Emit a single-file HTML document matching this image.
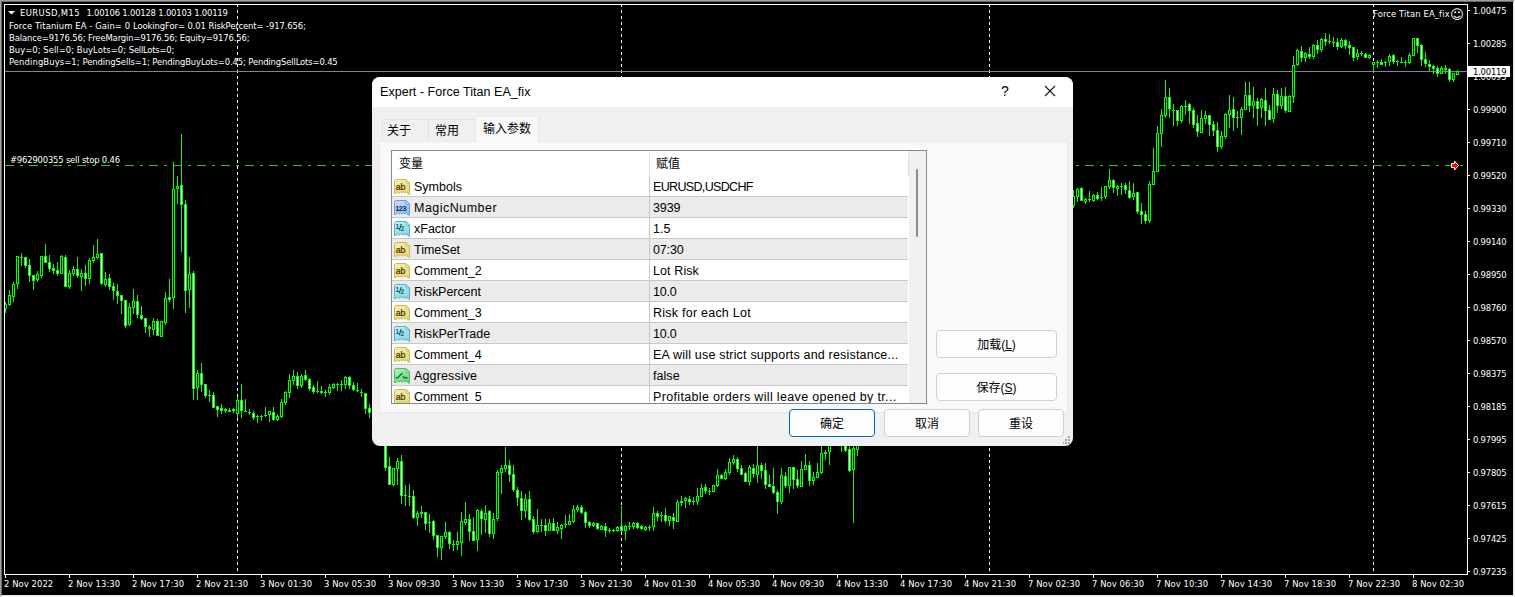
<!DOCTYPE html>
<html lang="zh-CN"><head><meta charset="utf-8"><title>EURUSD,M15</title>
<style>
*{box-sizing:border-box;margin:0;padding:0}
html,body{width:1515px;height:597px;overflow:hidden;background:#000}
body{font-family:"Liberation Sans","Noto Sans CJK SC",sans-serif}
.app{position:absolute;left:0;top:0;width:1515px;height:597px;background:#fff;overflow:hidden;
 border-top:1px solid #a0a0a0;border-left:1px solid #a0a0a0;border-right:1px solid #fff;border-bottom:1px solid #fff}
.black{position:absolute;left:0;top:0;width:1513px;height:595px;background:#000;
 border-top:1px solid #696969;border-left:1px solid #696969;border-right:1px solid #e3e3e3;border-bottom:1px solid #e3e3e3}
.chart{position:absolute;left:-1px;top:-1px}
.t{position:absolute;color:#fff;white-space:nowrap;font-family:"DejaVu Sans","Liberation Sans",sans-serif;font-stretch:condensed;font-size:9.4px;line-height:12px;height:12px;margin:0 0 0 -2px}
.pr{letter-spacing:-0.21px}
.tm{letter-spacing:0.065px}
.l1{letter-spacing:-0.03px}
.ln0{letter-spacing:-0.033px}
.ln1{letter-spacing:-0.117px}
.ln2{letter-spacing:-0.062px}
.ln3{letter-spacing:-0.092px}
.ss{letter-spacing:-0.194px}
.bid{letter-spacing:-0.21px;position:absolute;left:1467px;top:65px;width:42px;height:11px;background:#fff;color:#000;font-family:"DejaVu Sans","Liberation Sans",sans-serif;font-stretch:condensed;font-size:9.4px;line-height:11px;padding-left:5px;white-space:nowrap}
.ea{letter-spacing:0.11px}
.smile{position:absolute;left:1449px;top:6px;color:#fff;font-family:"DejaVu Sans",sans-serif;font-size:13.4px;line-height:16px;height:16px}
/* dialog */
.dlg{position:absolute;left:371px;top:76px;width:701px;height:369px;background:#f0f0f0;border-radius:8px;overflow:hidden;font-size:12px;color:#000}
.ttl{position:absolute;left:0;top:0;width:100%;height:30px;background:#fff}
.ttx{position:absolute;left:8px;top:7px;font-size:12.5px;line-height:16px;white-space:nowrap;letter-spacing:0.04px}
.q{position:absolute;left:629px;top:6px;font-size:14px;line-height:17px}
.x{position:absolute;left:672px;top:8px}
.tab{position:absolute;top:42px;height:23px;background:#f0f0f0;border:1px solid #e2e2e2;border-bottom:none;font-size:12px;line-height:22px;text-align:left;white-space:nowrap}
.t1{left:10px;width:47px;padding-left:4px}
.t2{left:56px;width:48px;padding-left:6px}
.t3{left:103px;width:64px;top:39px;height:26px;background:#f9f9f9;border-color:#e8e8e8;line-height:25px;padding-left:7px}
.pane{position:absolute;left:7px;top:64px;width:689px;height:272px;background:#f9f9f9;border:1px solid #e8e8e8}
.list{position:absolute;left:19px;top:73px;width:536px;height:254px;background:#fff;border:1px solid #828790;overflow:hidden}
.hd{position:absolute;left:0;top:0;width:517px;height:25px;background:#fff}
.hd span{position:absolute;top:5px;font-size:12px;line-height:16px}
.h1{left:7px}.h2{left:264px}
.hv1,.hv2{position:absolute;top:2px;width:1px;height:23px;background:#e0e0e0}
.hv1{left:257px}.hv2{left:516px}
.row{position:absolute;left:0;width:516px;height:21px;border-bottom:1px solid #c8c8c8;background:#fff;white-space:nowrap}
.row.odd{background:#ebebeb}
.ic{position:absolute;left:2px;top:3px}
.nm{position:absolute;left:22px;top:3px;font-size:12.5px;line-height:16px}
.vl{position:absolute;left:261px;top:3px;font-size:12.5px;line-height:16px}
.cv{position:absolute;left:257px;top:25px;width:1px;height:240px;background:#c8c8c8}
.sb{position:absolute;left:517px;top:0;width:17px;height:252px;background:#f0f0f0}
.th{position:absolute;left:7px;top:18px;width:2px;height:68px;background:#8a8a8a;border-radius:1px}
.btn{position:absolute;height:28px;border:1px solid #d0d0d0;border-radius:4px;background:#fdfdfd;font-size:12px;line-height:28px;text-align:center;white-space:nowrap}
.btn.def{border-color:#0067c0}
.grip{position:absolute;left:690px;top:358px}

</style></head>
<body>
<div class="app">
<div class="black"></div>
<svg class="chart" width="1515" height="597" viewBox="0 0 1515 597" shape-rendering="crispEdges">
<line x1="237.5" y1="4" x2="237.5" y2="574" stroke="#fff" stroke-width="1" stroke-dasharray="3 3" stroke-dashoffset="0"/>
<line x1="621.5" y1="4" x2="621.5" y2="574" stroke="#fff" stroke-width="1" stroke-dasharray="3 3" stroke-dashoffset="0"/>
<line x1="989.5" y1="4" x2="989.5" y2="574" stroke="#fff" stroke-width="1" stroke-dasharray="3 3" stroke-dashoffset="0"/>
<line x1="1373.5" y1="4" x2="1373.5" y2="574" stroke="#fff" stroke-width="1" stroke-dasharray="3 3" stroke-dashoffset="0"/>
<line x1="5" y1="71.5" x2="1467" y2="71.5" stroke="#778899" stroke-width="1"/>
<line x1="5" y1="165.5" x2="1467" y2="165.5" stroke="#2dc82d" stroke-width="1" stroke-dasharray="9 6 3 6"/>
<path d="M5 302h1v11h-1zM4 304h3v5h-3zM9 290h1v16h-1zM8 295h3v10h-3zM13 282h1v20h-1zM12 284h3v13h-3zM17 256h1v33h-1zM16 256h3v28h-3zM21 253h1v13h-1zM20 257h3v1h-3zM25 257h1v11h-1zM24 257h3v9h-3zM29 259h1v23h-1zM28 265h3v11h-3zM33 275h1v15h-1zM32 275h3v6h-3zM37 271h1v11h-1zM36 274h3v6h-3zM41 256h1v22h-1zM40 256h3v20h-3zM45 244h1v19h-1zM44 256h3v7h-3zM49 255h1v17h-1zM48 262h3v7h-3zM53 264h1v10h-1zM52 268h3v3h-3zM57 262h1v14h-1zM56 270h3v4h-3zM61 255h1v19h-1zM60 256h3v18h-3zM65 255h1v32h-1zM64 257h3v30h-3zM69 270h1v19h-1zM68 273h3v14h-3zM73 266h1v10h-1zM72 269h3v5h-3zM77 257h1v21h-1zM76 269h3v7h-3zM81 269h1v22h-1zM80 273h3v4h-3zM85 265h1v21h-1zM84 273h3v6h-3zM89 258h1v26h-1zM88 260h3v19h-3zM93 245h1v18h-1zM92 257h3v4h-3zM97 239h1v20h-1zM96 254h3v4h-3zM101 253h1v32h-1zM100 253h3v31h-3zM105 272h1v15h-1zM104 279h3v6h-3zM109 274h1v16h-1zM108 278h3v9h-3zM113 283h1v17h-1zM112 286h3v5h-3zM117 284h1v20h-1zM116 291h3v5h-3zM121 295h1v19h-1zM120 295h3v6h-3zM125 300h1v28h-1zM124 300h3v26h-3zM129 303h1v23h-1zM128 307h3v18h-3zM133 289h1v25h-1zM132 301h3v7h-3zM137 295h1v23h-1zM136 301h3v14h-3zM141 306h1v14h-1zM140 315h3v4h-3zM145 318h1v15h-1zM144 318h3v9h-3zM149 325h1v12h-1zM148 327h3v2h-3zM153 318h1v17h-1zM152 321h3v9h-3zM157 319h1v17h-1zM156 321h3v15h-3zM161 321h1v16h-1zM160 321h3v16h-3zM165 292h1v33h-1zM164 298h3v25h-3zM169 279h1v23h-1zM168 297h3v3h-3zM173 162h1v147h-1zM172 189h3v109h-3zM177 176h1v28h-1zM176 186h3v3h-3zM181 134h1v118h-1zM180 185h3v20h-3zM185 200h1v113h-1zM184 204h3v87h-3zM189 257h1v51h-1zM188 274h3v16h-3zM193 271h1v129h-1zM192 273h3v116h-3zM197 370h1v30h-1zM196 373h3v15h-3zM201 363h1v29h-1zM200 373h3v12h-3zM205 384h1v14h-1zM204 384h3v12h-3zM209 390h1v12h-1zM208 395h3v1h-3zM213 392h1v16h-1zM212 395h3v13h-3zM217 406h1v11h-1zM216 406h3v4h-3zM221 404h1v10h-1zM220 408h3v3h-3zM225 408h1v5h-1zM224 409h3v2h-3zM229 408h1v4h-1zM228 410h3v2h-3zM233 408h1v5h-1zM232 409h3v2h-3zM237 397h1v21h-1zM236 400h3v14h-3zM241 384h1v34h-1zM240 400h3v11h-3zM245 399h1v13h-1zM244 411h3v1h-3zM249 409h1v6h-1zM248 412h3v1h-3zM253 411h1v9h-1zM252 413h3v5h-3zM257 415h1v8h-1zM256 416h3v1h-3zM261 415h1v6h-1zM260 416h3v1h-3zM265 407h1v10h-1zM264 415h3v1h-3zM269 411h1v11h-1zM268 411h3v4h-3zM273 407h1v14h-1zM272 412h3v8h-3zM277 414h1v7h-1zM276 416h3v4h-3zM281 399h1v19h-1zM280 402h3v15h-3zM285 391h1v14h-1zM284 392h3v11h-3zM289 374h1v24h-1zM288 380h3v13h-3zM293 370h1v15h-1zM292 376h3v5h-3zM297 372h1v17h-1zM296 376h3v10h-3zM301 374h1v14h-1zM300 376h3v10h-3zM305 370h1v11h-1zM304 375h3v5h-3zM309 378h1v13h-1zM308 379h3v10h-3zM313 385h1v9h-1zM312 387h3v5h-3zM317 381h1v12h-1zM316 391h3v1h-3zM321 386h1v8h-1zM320 391h3v2h-3zM325 390h1v7h-1zM324 392h3v1h-3zM329 384h1v11h-1zM328 387h3v6h-3zM333 383h1v6h-1zM332 384h3v4h-3zM337 383h1v8h-1zM336 384h3v1h-3zM341 380h1v11h-1zM340 384h3v1h-3zM345 376h1v13h-1zM344 377h3v8h-3zM349 376h1v13h-1zM348 377h3v9h-3zM353 382h1v9h-1zM352 385h3v5h-3zM357 383h1v9h-1zM356 390h3v1h-3zM361 389h1v8h-1zM360 392h3v1h-3zM365 393h1v21h-1zM364 393h3v16h-3zM369 404h1v14h-1zM368 408h3v5h-3zM373 412h1v17h-1zM372 413h3v14h-3zM377 424h1v13h-1zM376 426h3v9h-3zM381 430h1v15h-1zM380 434h3v9h-3zM385 440h1v31h-1zM384 442h3v26h-3zM389 457h1v28h-1zM388 466h3v19h-3zM393 468h1v18h-1zM392 468h3v17h-3zM397 458h1v27h-1zM396 461h3v8h-3zM401 455h1v49h-1zM400 461h3v35h-3zM405 485h1v21h-1zM404 495h3v1h-3zM409 484h1v22h-1zM408 496h3v1h-3zM413 490h1v29h-1zM412 496h3v22h-3zM417 511h1v15h-1zM416 513h3v5h-3zM421 506h1v12h-1zM420 512h3v2h-3zM425 512h1v18h-1zM424 512h3v12h-3zM429 514h1v19h-1zM428 522h3v1h-3zM433 520h1v20h-1zM432 521h3v15h-3zM437 535h1v22h-1zM436 535h3v13h-3zM441 536h1v24h-1zM440 536h3v12h-3zM445 522h1v17h-1zM444 532h3v5h-3zM449 531h1v18h-1zM448 532h3v12h-3zM453 540h1v11h-1zM452 544h3v1h-3zM457 532h1v18h-1zM456 541h3v4h-3zM461 512h1v44h-1zM460 521h3v22h-3zM465 502h1v23h-1zM464 519h3v4h-3zM469 514h1v27h-1zM468 519h3v13h-3zM473 517h1v24h-1zM472 531h3v10h-3zM477 509h1v42h-1zM476 510h3v30h-3zM481 509h1v26h-1zM480 511h3v8h-3zM485 505h1v28h-1zM484 513h3v7h-3zM489 510h1v27h-1zM488 511h3v23h-3zM493 513h1v26h-1zM492 519h3v15h-3zM497 470h1v51h-1zM496 472h3v47h-3zM501 465h1v29h-1zM500 468h3v5h-3zM505 447h1v25h-1zM504 465h3v4h-3zM509 460h1v22h-1zM508 465h3v10h-3zM513 465h1v27h-1zM512 474h3v16h-3zM517 487h1v19h-1zM516 490h3v8h-3zM521 491h1v29h-1zM520 498h3v13h-3zM525 494h1v24h-1zM524 499h3v12h-3zM529 491h1v30h-1zM528 499h3v21h-3zM533 516h1v18h-1zM532 519h3v13h-3zM537 509h1v24h-1zM536 525h3v7h-3zM541 519h1v13h-1zM540 525h3v1h-3zM545 519h1v17h-1zM544 525h3v6h-3zM549 519h1v12h-1zM548 523h3v8h-3zM553 518h1v13h-1zM552 523h3v8h-3zM557 522h1v12h-1zM556 527h3v4h-3zM561 524h1v15h-1zM560 525h3v4h-3zM565 515h1v13h-1zM564 524h3v1h-3zM569 514h1v11h-1zM568 521h3v4h-3zM573 505h1v18h-1zM572 509h3v13h-3zM577 505h1v7h-1zM576 507h3v3h-3zM581 505h1v9h-1zM580 507h3v6h-3zM585 511h1v17h-1zM584 512h3v11h-3zM589 521h1v7h-1zM588 522h3v4h-3zM593 522h1v5h-1zM592 523h3v3h-3zM597 523h1v7h-1zM596 523h3v6h-3zM601 525h1v5h-1zM600 526h3v4h-3zM605 523h1v14h-1zM604 526h3v5h-3zM609 528h1v5h-1zM608 530h3v1h-3zM613 529h1v3h-1zM612 530h3v1h-3zM617 526h1v6h-1zM616 527h3v4h-3zM621 506h1v26h-1zM620 526h3v5h-3zM625 525h1v15h-1zM624 526h3v5h-3zM629 522h1v8h-1zM628 526h3v1h-3zM633 522h1v7h-1zM632 523h3v4h-3zM637 522h1v7h-1zM636 523h3v5h-3zM641 525h1v5h-1zM640 526h3v3h-3zM645 526h1v5h-1zM644 527h3v3h-3zM649 525h1v6h-1zM648 527h3v1h-3zM653 507h1v24h-1zM652 513h3v14h-3zM657 511h1v10h-1zM656 513h3v4h-3zM661 512h1v10h-1zM660 515h3v1h-3zM665 508h1v15h-1zM664 515h3v6h-3zM669 516h1v10h-1zM668 516h3v5h-3zM673 513h1v16h-1zM672 517h3v4h-3zM677 500h1v22h-1zM676 502h3v20h-3zM681 496h1v10h-1zM680 501h3v2h-3zM685 497h1v11h-1zM684 498h3v3h-3zM689 496h1v9h-1zM688 499h3v3h-3zM693 497h1v8h-1zM692 501h3v1h-3zM697 488h1v17h-1zM696 496h3v6h-3zM701 484h1v13h-1zM700 488h3v9h-3zM705 484h1v10h-1zM704 487h3v4h-3zM709 488h1v7h-1zM708 491h3v1h-3zM713 485h1v7h-1zM712 485h3v7h-3zM717 469h1v18h-1zM716 475h3v11h-3zM721 474h1v5h-1zM720 475h3v4h-3zM725 469h1v11h-1zM724 472h3v7h-3zM729 458h1v17h-1zM728 462h3v11h-3zM733 455h1v10h-1zM732 459h3v4h-3zM737 457h1v15h-1zM736 459h3v10h-3zM741 465h1v10h-1zM740 468h3v7h-3zM745 472h1v10h-1zM744 473h3v9h-3zM749 465h1v21h-1zM748 467h3v15h-3zM753 464h1v14h-1zM752 468h3v6h-3zM757 440h1v43h-1zM756 465h3v10h-3zM761 463h1v16h-1zM760 465h3v6h-3zM765 463h1v26h-1zM764 470h3v15h-3zM769 475h1v12h-1zM768 484h3v3h-3zM773 468h1v26h-1zM772 486h3v7h-3zM777 490h1v24h-1zM776 492h3v10h-3zM781 468h1v36h-1zM780 475h3v27h-3zM785 472h1v16h-1zM784 476h3v10h-3zM789 467h1v26h-1zM788 467h3v19h-3zM793 467h1v22h-1zM792 467h3v13h-3zM797 470h1v18h-1zM796 479h3v7h-3zM801 461h1v26h-1zM800 469h3v18h-3zM805 454h1v16h-1zM804 465h3v5h-3zM809 461h1v25h-1zM808 465h3v16h-3zM813 472h1v13h-1zM812 477h3v4h-3zM817 463h1v15h-1zM816 472h3v6h-3zM821 440h1v34h-1zM820 453h3v20h-3zM825 450h1v10h-1zM824 452h3v2h-3zM829 436h1v29h-1zM828 438h3v14h-3zM833 432h1v13h-1zM832 436h3v5h-3zM837 434h1v12h-1zM836 438h3v4h-3zM841 436h1v16h-1zM840 438h3v7h-3zM845 438h1v14h-1zM844 440h3v11h-3zM849 440h1v32h-1zM848 449h3v22h-3zM853 436h1v87h-1zM852 448h3v22h-3zM857 432h1v24h-1zM856 436h3v14h-3zM861 420h1v21h-1zM860 424h3v13h-3zM1073 190h1v18h-1zM1072 196h3v10h-3zM1077 188h1v14h-1zM1076 189h3v8h-3zM1081 187h1v14h-1zM1080 188h3v13h-3zM1085 198h1v6h-1zM1084 199h3v3h-3zM1089 191h1v11h-1zM1088 199h3v1h-3zM1093 194h1v8h-1zM1092 195h3v6h-3zM1097 192h1v8h-1zM1096 195h3v4h-3zM1101 187h1v14h-1zM1100 197h3v1h-3zM1105 186h1v13h-1zM1104 186h3v11h-3zM1109 169h1v20h-1zM1108 180h3v7h-3zM1113 179h1v14h-1zM1112 180h3v8h-3zM1117 185h1v11h-1zM1116 186h3v3h-3zM1121 183h1v12h-1zM1120 186h3v1h-3zM1125 183h1v11h-1zM1124 185h3v5h-3zM1129 181h1v18h-1zM1128 190h3v8h-3zM1133 183h1v17h-1zM1132 193h3v4h-3zM1137 192h1v22h-1zM1136 192h3v20h-3zM1141 203h1v21h-1zM1140 211h3v4h-3zM1145 211h1v13h-1zM1144 214h3v7h-3zM1149 181h1v42h-1zM1148 184h3v37h-3zM1153 148h1v37h-1zM1152 171h3v14h-3zM1157 126h1v46h-1zM1156 133h3v39h-3zM1161 109h1v38h-1zM1160 115h3v19h-3zM1165 80h1v38h-1zM1164 97h3v19h-3zM1169 88h1v30h-1zM1168 97h3v12h-3zM1173 104h1v22h-1zM1172 110h3v1h-3zM1177 110h1v16h-1zM1176 110h3v11h-3zM1181 105h1v18h-1zM1180 106h3v15h-3zM1185 100h1v15h-1zM1184 106h3v1h-3zM1189 103h1v21h-1zM1188 104h3v7h-3zM1193 108h1v20h-1zM1192 110h3v15h-3zM1197 115h1v22h-1zM1196 123h3v9h-3zM1201 110h1v23h-1zM1200 118h3v15h-3zM1205 111h1v13h-1zM1204 115h3v4h-3zM1209 115h1v21h-1zM1208 115h3v10h-3zM1213 121h1v15h-1zM1212 124h3v7h-3zM1217 122h1v30h-1zM1216 130h3v17h-3zM1221 131h1v18h-1zM1220 136h3v11h-3zM1225 113h1v26h-1zM1224 114h3v23h-3zM1229 95h1v33h-1zM1228 110h3v5h-3zM1233 97h1v34h-1zM1232 109h3v9h-3zM1237 111h1v17h-1zM1236 117h3v1h-3zM1241 107h1v28h-1zM1240 109h3v9h-3zM1245 82h1v28h-1zM1244 95h3v15h-3zM1249 82h1v30h-1zM1248 95h3v11h-3zM1253 87h1v31h-1zM1252 101h3v5h-3zM1257 98h1v28h-1zM1256 101h3v8h-3zM1261 98h1v20h-1zM1260 99h3v9h-3zM1265 88h1v38h-1zM1264 100h3v11h-3zM1269 105h1v15h-1zM1268 110h3v10h-3zM1273 88h1v35h-1zM1272 94h3v25h-3zM1277 90h1v23h-1zM1276 94h3v12h-3zM1281 88h1v21h-1zM1280 96h3v10h-3zM1285 87h1v26h-1zM1284 96h3v15h-3zM1289 95h1v17h-1zM1288 96h3v16h-3zM1293 56h1v47h-1zM1292 65h3v32h-3zM1297 49h1v17h-1zM1296 50h3v15h-3zM1301 46h1v16h-1zM1300 51h3v7h-3zM1305 52h1v10h-1zM1304 53h3v5h-3zM1309 47h1v12h-1zM1308 54h3v3h-3zM1313 44h1v15h-1zM1312 45h3v12h-3zM1317 40h1v14h-1zM1316 45h3v5h-3zM1321 38h1v14h-1zM1320 39h3v11h-3zM1325 33h1v13h-1zM1324 39h3v3h-3zM1329 34h1v10h-1zM1328 41h3v1h-3zM1333 37h1v10h-1zM1332 42h3v1h-3zM1337 38h1v12h-1zM1336 42h3v5h-3zM1341 38h1v10h-1zM1340 40h3v7h-3zM1345 39h1v10h-1zM1344 40h3v6h-3zM1349 41h1v14h-1zM1348 45h3v3h-3zM1353 47h1v14h-1zM1352 47h3v11h-3zM1357 49h1v11h-1zM1356 53h3v4h-3zM1361 51h1v5h-1zM1360 53h3v1h-3zM1365 53h1v5h-1zM1364 54h3v4h-3zM1369 54h1v5h-1zM1368 55h3v3h-3zM1373 62h1v11h-1zM1372 62h3v3h-3zM1377 60h1v8h-1zM1376 62h3v1h-3zM1381 59h1v6h-1zM1380 62h3v3h-3zM1385 61h1v6h-1zM1384 62h3v1h-3zM1389 54h1v12h-1zM1388 56h3v6h-3zM1393 54h1v10h-1zM1392 55h3v7h-3zM1397 60h1v6h-1zM1396 61h3v1h-3zM1401 57h1v6h-1zM1400 62h3v1h-3zM1405 60h1v7h-1zM1404 62h3v1h-3zM1409 53h1v11h-1zM1408 55h3v8h-3zM1413 38h1v18h-1zM1412 38h3v18h-3zM1417 38h1v15h-1zM1416 38h3v8h-3zM1421 44h1v22h-1zM1420 45h3v15h-3zM1425 52h1v15h-1zM1424 59h3v5h-3zM1429 60h1v11h-1zM1428 64h3v3h-3zM1433 65h1v9h-1zM1432 66h3v3h-3zM1437 66h1v11h-1zM1436 68h3v6h-3zM1441 66h1v8h-1zM1440 68h3v6h-3zM1445 65h1v9h-1zM1444 68h3v2h-3zM1449 68h1v14h-1zM1448 69h3v11h-3zM1453 73h1v9h-1zM1452 73h3v7h-3zM1457 70h1v5h-1zM1456 71h3v4h-3z" fill="#00ff00"/>
<path d="M5 305h1v3h-1zM9 296h1v8h-1zM13 285h1v11h-1zM17 257h1v26h-1zM37 275h1v4h-1zM41 257h1v18h-1zM61 257h1v16h-1zM69 274h1v12h-1zM73 270h1v3h-1zM81 274h1v2h-1zM89 261h1v17h-1zM93 258h1v2h-1zM97 255h1v2h-1zM105 280h1v4h-1zM129 308h1v16h-1zM133 302h1v5h-1zM153 322h1v7h-1zM161 322h1v14h-1zM165 299h1v23h-1zM173 190h1v107h-1zM177 187h1v1h-1zM189 275h1v14h-1zM197 374h1v13h-1zM237 401h1v12h-1zM269 412h1v2h-1zM277 417h1v2h-1zM281 403h1v13h-1zM285 393h1v9h-1zM289 381h1v11h-1zM293 377h1v3h-1zM301 377h1v8h-1zM329 388h1v4h-1zM333 385h1v2h-1zM345 378h1v6h-1zM393 469h1v15h-1zM397 462h1v6h-1zM417 514h1v3h-1zM441 537h1v10h-1zM445 533h1v3h-1zM457 542h1v2h-1zM461 522h1v20h-1zM465 520h1v2h-1zM477 511h1v28h-1zM485 514h1v5h-1zM493 520h1v13h-1zM497 473h1v45h-1zM501 469h1v3h-1zM505 466h1v2h-1zM525 500h1v10h-1zM537 526h1v5h-1zM549 524h1v6h-1zM557 528h1v2h-1zM561 526h1v2h-1zM569 522h1v2h-1zM573 510h1v11h-1zM577 508h1v1h-1zM593 524h1v1h-1zM601 527h1v2h-1zM617 528h1v2h-1zM625 527h1v3h-1zM633 524h1v2h-1zM645 528h1v1h-1zM653 514h1v12h-1zM669 517h1v3h-1zM677 503h1v18h-1zM685 499h1v1h-1zM697 497h1v4h-1zM701 489h1v7h-1zM713 486h1v5h-1zM717 476h1v9h-1zM725 473h1v5h-1zM729 463h1v9h-1zM733 460h1v2h-1zM749 468h1v13h-1zM757 466h1v8h-1zM781 476h1v25h-1zM789 468h1v17h-1zM801 470h1v16h-1zM805 466h1v3h-1zM813 478h1v2h-1zM817 473h1v4h-1zM821 454h1v18h-1zM829 439h1v12h-1zM837 439h1v2h-1zM853 449h1v20h-1zM857 437h1v12h-1zM861 425h1v11h-1zM1073 197h1v8h-1zM1077 190h1v6h-1zM1085 200h1v1h-1zM1093 196h1v4h-1zM1105 187h1v9h-1zM1109 181h1v5h-1zM1117 187h1v1h-1zM1133 194h1v2h-1zM1149 185h1v35h-1zM1153 172h1v12h-1zM1157 134h1v37h-1zM1161 116h1v17h-1zM1165 98h1v17h-1zM1181 107h1v13h-1zM1201 119h1v13h-1zM1205 116h1v2h-1zM1221 137h1v9h-1zM1225 115h1v21h-1zM1229 111h1v3h-1zM1241 110h1v7h-1zM1245 96h1v13h-1zM1253 102h1v3h-1zM1261 100h1v7h-1zM1273 95h1v23h-1zM1281 97h1v8h-1zM1289 97h1v14h-1zM1293 66h1v30h-1zM1297 51h1v13h-1zM1305 54h1v3h-1zM1313 46h1v10h-1zM1321 40h1v9h-1zM1341 41h1v5h-1zM1357 54h1v2h-1zM1369 56h1v1h-1zM1373 63h1v1h-1zM1389 57h1v4h-1zM1409 56h1v6h-1zM1413 39h1v16h-1zM1441 69h1v4h-1zM1453 74h1v5h-1zM1457 72h1v2h-1z" fill="#000"/>
<path d="M25 258h1v7h-1zM29 266h1v9h-1zM33 276h1v4h-1zM45 257h1v5h-1zM49 263h1v5h-1zM53 269h1v1h-1zM57 271h1v2h-1zM65 258h1v28h-1zM77 270h1v5h-1zM85 274h1v4h-1zM101 254h1v29h-1zM109 279h1v7h-1zM113 287h1v3h-1zM117 292h1v3h-1zM121 296h1v4h-1zM125 301h1v24h-1zM137 302h1v12h-1zM141 316h1v2h-1zM145 319h1v7h-1zM157 322h1v13h-1zM169 298h1v1h-1zM181 186h1v18h-1zM185 205h1v85h-1zM193 274h1v114h-1zM201 374h1v10h-1zM205 385h1v10h-1zM213 396h1v11h-1zM217 407h1v2h-1zM221 409h1v1h-1zM241 401h1v9h-1zM253 414h1v3h-1zM273 413h1v6h-1zM297 377h1v8h-1zM305 376h1v3h-1zM309 380h1v8h-1zM313 388h1v3h-1zM349 378h1v7h-1zM353 386h1v3h-1zM365 394h1v14h-1zM369 409h1v3h-1zM373 414h1v12h-1zM377 427h1v7h-1zM381 435h1v7h-1zM385 443h1v24h-1zM389 467h1v17h-1zM401 462h1v33h-1zM413 497h1v20h-1zM425 513h1v10h-1zM433 522h1v13h-1zM437 536h1v11h-1zM449 533h1v10h-1zM469 520h1v11h-1zM473 532h1v8h-1zM481 512h1v6h-1zM489 512h1v21h-1zM509 466h1v8h-1zM513 475h1v14h-1zM517 491h1v6h-1zM521 499h1v11h-1zM529 500h1v19h-1zM533 520h1v11h-1zM545 526h1v4h-1zM553 524h1v6h-1zM581 508h1v4h-1zM585 513h1v9h-1zM589 523h1v2h-1zM597 524h1v4h-1zM605 527h1v3h-1zM621 527h1v3h-1zM637 524h1v3h-1zM641 527h1v1h-1zM657 514h1v2h-1zM665 516h1v4h-1zM673 518h1v2h-1zM689 500h1v1h-1zM705 488h1v2h-1zM721 476h1v2h-1zM737 460h1v8h-1zM741 469h1v5h-1zM745 474h1v7h-1zM753 469h1v4h-1zM761 466h1v4h-1zM765 471h1v13h-1zM769 485h1v1h-1zM773 487h1v5h-1zM777 493h1v8h-1zM785 477h1v8h-1zM793 468h1v11h-1zM797 480h1v5h-1zM809 466h1v14h-1zM833 437h1v3h-1zM841 439h1v5h-1zM845 441h1v9h-1zM849 450h1v20h-1zM1081 189h1v11h-1zM1097 196h1v2h-1zM1113 181h1v6h-1zM1125 186h1v3h-1zM1129 191h1v6h-1zM1137 193h1v18h-1zM1141 212h1v2h-1zM1145 215h1v5h-1zM1169 98h1v10h-1zM1177 111h1v9h-1zM1189 105h1v5h-1zM1193 111h1v13h-1zM1197 124h1v7h-1zM1209 116h1v8h-1zM1213 125h1v5h-1zM1217 131h1v15h-1zM1233 110h1v7h-1zM1249 96h1v9h-1zM1257 102h1v6h-1zM1265 101h1v9h-1zM1269 111h1v8h-1zM1277 95h1v10h-1zM1285 97h1v13h-1zM1301 52h1v5h-1zM1309 55h1v1h-1zM1317 46h1v3h-1zM1325 40h1v1h-1zM1337 43h1v3h-1zM1345 41h1v4h-1zM1349 46h1v1h-1zM1353 48h1v9h-1zM1365 55h1v2h-1zM1381 63h1v1h-1zM1393 56h1v5h-1zM1417 39h1v6h-1zM1421 46h1v13h-1zM1425 60h1v3h-1zM1429 65h1v1h-1zM1433 67h1v1h-1zM1437 69h1v4h-1zM1449 70h1v9h-1z" fill="#fff"/>
<path d="M4.5 4.5H1467.5V574.5H4.5Z" stroke="#fff" stroke-width="1" fill="none"/>
<path d="M1468 10.5H1470M1468 43.5H1470M1468 76.5H1470M1468 109.5H1470M1468 142.5H1470M1468 175.5H1470M1468 208.5H1470M1468 241.5H1470M1468 274.5H1470M1468 307.5H1470M1468 340.5H1470M1468 373.5H1470M1468 406.5H1470M1468 439.5H1470M1468 472.5H1470M1468 505.5H1470M1468 538.5H1470M1468 571.5H1470M5.5 575V578M69.5 575V578M133.5 575V578M197.5 575V578M261.5 575V578M325.5 575V578M389.5 575V578M453.5 575V578M517.5 575V578M581.5 575V578M645.5 575V578M709.5 575V578M773.5 575V578M837.5 575V578M901.5 575V578M965.5 575V578M1029.5 575V578M1093.5 575V578M1157.5 575V578M1221.5 575V578M1285.5 575V578M1349.5 575V578M1413.5 575V578" stroke="#fff" stroke-width="1" fill="none"/>
<path d="M1451.5 163.5H1454.5V161L1458.5 165.5L1454.5 170V167.5H1451.5Z" fill="#ff0000" stroke="#fff" stroke-width="1" shape-rendering="auto"/>
<path d="M8 11H15L11.5 14.5Z" fill="#fff" shape-rendering="auto"/>
</svg>
<div class="t pr" style="left:1474px;top:4px">1.00475</div>
<div class="t pr" style="left:1474px;top:37px">1.00285</div>
<div class="t pr" style="left:1474px;top:70px">1.00095</div>
<div class="t pr" style="left:1474px;top:103px">0.99900</div>
<div class="t pr" style="left:1474px;top:136px">0.99710</div>
<div class="t pr" style="left:1474px;top:169px">0.99520</div>
<div class="t pr" style="left:1474px;top:202px">0.99330</div>
<div class="t pr" style="left:1474px;top:235px">0.99140</div>
<div class="t pr" style="left:1474px;top:268px">0.98950</div>
<div class="t pr" style="left:1474px;top:301px">0.98760</div>
<div class="t pr" style="left:1474px;top:334px">0.98570</div>
<div class="t pr" style="left:1474px;top:367px">0.98375</div>
<div class="t pr" style="left:1474px;top:400px">0.98185</div>
<div class="t pr" style="left:1474px;top:433px">0.97995</div>
<div class="t pr" style="left:1474px;top:466px">0.97805</div>
<div class="t pr" style="left:1474px;top:499px">0.97615</div>
<div class="t pr" style="left:1474px;top:532px">0.97425</div>
<div class="t pr" style="left:1474px;top:565px">0.97235</div>
<div class="t tm" style="left:5px;top:577px">2 Nov 2022</div>
<div class="t tm" style="left:69px;top:577px">2 Nov 13:30</div>
<div class="t tm" style="left:133px;top:577px">2 Nov 17:30</div>
<div class="t tm" style="left:197px;top:577px">2 Nov 21:30</div>
<div class="t tm" style="left:261px;top:577px">3 Nov 01:30</div>
<div class="t tm" style="left:325px;top:577px">3 Nov 05:30</div>
<div class="t tm" style="left:389px;top:577px">3 Nov 09:30</div>
<div class="t tm" style="left:453px;top:577px">3 Nov 13:30</div>
<div class="t tm" style="left:517px;top:577px">3 Nov 17:30</div>
<div class="t tm" style="left:581px;top:577px">3 Nov 21:30</div>
<div class="t tm" style="left:645px;top:577px">4 Nov 01:30</div>
<div class="t tm" style="left:709px;top:577px">4 Nov 05:30</div>
<div class="t tm" style="left:773px;top:577px">4 Nov 09:30</div>
<div class="t tm" style="left:837px;top:577px">4 Nov 13:30</div>
<div class="t tm" style="left:901px;top:577px">4 Nov 17:30</div>
<div class="t tm" style="left:965px;top:577px">4 Nov 21:30</div>
<div class="t tm" style="left:1029px;top:577px">7 Nov 02:30</div>
<div class="t tm" style="left:1093px;top:577px">7 Nov 06:30</div>
<div class="t tm" style="left:1157px;top:577px">7 Nov 10:30</div>
<div class="t tm" style="left:1221px;top:577px">7 Nov 14:30</div>
<div class="t tm" style="left:1285px;top:577px">7 Nov 18:30</div>
<div class="t tm" style="left:1349px;top:577px">7 Nov 22:30</div>
<div class="t tm" style="left:1413px;top:577px">8 Nov 02:30</div>
<div class="bid">1.00119</div>
<div class="t l1" style="left:21px;top:6px"><span style="letter-spacing:0.4px">EURUSD,M15</span>&nbsp; <span style="letter-spacing:-0.2px;margin-left:1px">1.00106 1.00128 1.00103 1.00119</span></div>
<div class="t ln" style="left:10px;top:19px;white-space:pre"><span style="letter-spacing:0.08px">Force Titanium EA - Gain= 0 </span><span style="letter-spacing:-0.1px">LookingFor= 0.01 RiskPercent= -917.656;</span></div>
<div class="t ln" style="left:10px;top:31px;white-space:pre"><span style="letter-spacing:-0.117px">Balance=9176.56; FreeMargin=9176.56; Equity=9176.56;</span></div>
<div class="t ln" style="left:10px;top:43px;white-space:pre"><span style="letter-spacing:0.04px">Buy=0; Sell=0; BuyLots=0; </span><span style="letter-spacing:-0.24px">SellLots=0;</span></div>
<div class="t ln" style="left:10px;top:55px;white-space:pre"><span style="letter-spacing:0.09px">PendingBuys=1; </span><span style="letter-spacing:-0.092px">PendingSells=1; </span><span style="letter-spacing:-0.125px">PendingBuyLots=0.45; </span><span style="letter-spacing:-0.142px">PendingSellLots=0.45</span></div>
<div class="t ss" style="left:11px;top:153px">#962900355 sell stop 0.46</div>
<div class="t ea" style="left:1374px;top:7px">Force Titan EA_fix</div>
<div class="smile">☺</div>
<div class="dlg">
<div class="ttl"><span class="ttx">Expert - Force Titan EA_fix</span>
<span class="q">?</span>
<svg class="x" width="12" height="12" viewBox="0 0 12 12"><path d="M1 1L11 11M11 1L1 11" stroke="#1b1b1b" stroke-width="1.1" fill="none"/></svg>
</div>
<div class="tab t1">关于</div><div class="tab t2">常用</div>
<div class="pane"></div>
<div class="tab t3">输入参数</div>
<div class="list">
<div class="hd"><span class="h1">变量</span><span class="h2">赋值</span><i class="hv1"></i><i class="hv2"></i></div>
<div class="row" style="top:25px"><svg class="ic" width="16" height="16" viewBox="0 0 16 16"><defs><linearGradient id="gab" x1="0" y1="0" x2="0.6" y2="1"><stop offset="0" stop-color="#f8f0b4"/><stop offset="1" stop-color="#e9d977"/></linearGradient></defs><path d="M0.5 2.5Q0.5 0.5 2.5 0.5H12L15.5 4V15.2L14.2 15L12.6 12.8L11.1 14.2L9.6 12.8L8.1 14.2L6.6 12.8L5.1 14.2L3.6 12.8L2.1 14.5H0.5Z" fill="url(#gab)" stroke="#c9b650" stroke-width="1"/><path d="M12 0.8V4H15.2Z" fill="#fbf7dc" stroke="#c9b650" stroke-width="0.8" stroke-linejoin="round"/><text x="1.7" y="10.6" font-family="Liberation Sans, sans-serif" font-size="8.8" fill="#3c3400" stroke="#3c3400" stroke-width="0.22" letter-spacing="-0.1">ab</text></svg><span class="nm" style="letter-spacing:0px">Symbols</span><span class="vl" style="letter-spacing:-0.66px">EURUSD,USDCHF</span></div>
<div class="row odd" style="top:46px"><svg class="ic" width="16" height="16" viewBox="0 0 16 16"><defs><linearGradient id="g123" x1="0" y1="0" x2="0.6" y2="1"><stop offset="0" stop-color="#cfe2fa"/><stop offset="1" stop-color="#8ebaee"/></linearGradient></defs><path d="M0.5 2.5Q0.5 0.5 2.5 0.5H12L15.5 4V15.2L14.2 15L12.6 12.8L11.1 14.2L9.6 12.8L8.1 14.2L6.6 12.8L5.1 14.2L3.6 12.8L2.1 14.5H0.5Z" fill="url(#g123)" stroke="#6c9cdc" stroke-width="1"/><path d="M12 0.8V4H15.2Z" fill="#e8f1fc" stroke="#6c9cdc" stroke-width="0.8" stroke-linejoin="round"/><text x="1.3" y="11" font-family="Liberation Sans, sans-serif" font-size="7.2" font-weight="bold" fill="#0c2450" letter-spacing="-0.45">123</text></svg><span class="nm" style="letter-spacing:0.48px">MagicNumber</span><span class="vl" style="letter-spacing:-0.1px">3939</span></div>
<div class="row" style="top:67px"><svg class="ic" width="16" height="16" viewBox="0 0 16 16"><defs><linearGradient id="gv2" x1="0" y1="0" x2="0.6" y2="1"><stop offset="0" stop-color="#c8f0f8"/><stop offset="1" stop-color="#88d6e6"/></linearGradient></defs><path d="M0.5 2.5Q0.5 0.5 2.5 0.5H12L15.5 4V15.2L14.2 15L12.6 12.8L11.1 14.2L9.6 12.8L8.1 14.2L6.6 12.8L5.1 14.2L3.6 12.8L2.1 14.5H0.5Z" fill="url(#gv2)" stroke="#58b2c6" stroke-width="1"/><path d="M12 0.8V4H15.2Z" fill="#e2f7fb" stroke="#58b2c6" stroke-width="0.8" stroke-linejoin="round"/><text x="1.6" y="7.6" font-family="Liberation Sans, sans-serif" font-size="6.4" font-weight="bold" fill="#0f5868">1</text><path d="M7.3 3L5.2 9.2" stroke="#0f5868" stroke-width="1.1" fill="none"/><text x="6.5" y="10" font-family="Liberation Sans, sans-serif" font-size="6.4" font-weight="bold" fill="#0f5868">2</text></svg><span class="nm" style="letter-spacing:0px">xFactor</span><span class="vl" style="letter-spacing:0px">1.5</span></div>
<div class="row odd" style="top:88px"><svg class="ic" width="16" height="16" viewBox="0 0 16 16"><defs><linearGradient id="gab" x1="0" y1="0" x2="0.6" y2="1"><stop offset="0" stop-color="#f8f0b4"/><stop offset="1" stop-color="#e9d977"/></linearGradient></defs><path d="M0.5 2.5Q0.5 0.5 2.5 0.5H12L15.5 4V15.2L14.2 15L12.6 12.8L11.1 14.2L9.6 12.8L8.1 14.2L6.6 12.8L5.1 14.2L3.6 12.8L2.1 14.5H0.5Z" fill="url(#gab)" stroke="#c9b650" stroke-width="1"/><path d="M12 0.8V4H15.2Z" fill="#fbf7dc" stroke="#c9b650" stroke-width="0.8" stroke-linejoin="round"/><text x="1.7" y="10.6" font-family="Liberation Sans, sans-serif" font-size="8.8" fill="#3c3400" stroke="#3c3400" stroke-width="0.22" letter-spacing="-0.1">ab</text></svg><span class="nm" style="letter-spacing:0px">TimeSet</span><span class="vl" style="letter-spacing:-0.15px">07:30</span></div>
<div class="row" style="top:109px"><svg class="ic" width="16" height="16" viewBox="0 0 16 16"><defs><linearGradient id="gab" x1="0" y1="0" x2="0.6" y2="1"><stop offset="0" stop-color="#f8f0b4"/><stop offset="1" stop-color="#e9d977"/></linearGradient></defs><path d="M0.5 2.5Q0.5 0.5 2.5 0.5H12L15.5 4V15.2L14.2 15L12.6 12.8L11.1 14.2L9.6 12.8L8.1 14.2L6.6 12.8L5.1 14.2L3.6 12.8L2.1 14.5H0.5Z" fill="url(#gab)" stroke="#c9b650" stroke-width="1"/><path d="M12 0.8V4H15.2Z" fill="#fbf7dc" stroke="#c9b650" stroke-width="0.8" stroke-linejoin="round"/><text x="1.7" y="10.6" font-family="Liberation Sans, sans-serif" font-size="8.8" fill="#3c3400" stroke="#3c3400" stroke-width="0.22" letter-spacing="-0.1">ab</text></svg><span class="nm" style="letter-spacing:-0.05px">Comment_2</span><span class="vl" style="letter-spacing:0.1px">Lot Risk</span></div>
<div class="row odd" style="top:130px"><svg class="ic" width="16" height="16" viewBox="0 0 16 16"><defs><linearGradient id="gv2" x1="0" y1="0" x2="0.6" y2="1"><stop offset="0" stop-color="#c8f0f8"/><stop offset="1" stop-color="#88d6e6"/></linearGradient></defs><path d="M0.5 2.5Q0.5 0.5 2.5 0.5H12L15.5 4V15.2L14.2 15L12.6 12.8L11.1 14.2L9.6 12.8L8.1 14.2L6.6 12.8L5.1 14.2L3.6 12.8L2.1 14.5H0.5Z" fill="url(#gv2)" stroke="#58b2c6" stroke-width="1"/><path d="M12 0.8V4H15.2Z" fill="#e2f7fb" stroke="#58b2c6" stroke-width="0.8" stroke-linejoin="round"/><text x="1.6" y="7.6" font-family="Liberation Sans, sans-serif" font-size="6.4" font-weight="bold" fill="#0f5868">1</text><path d="M7.3 3L5.2 9.2" stroke="#0f5868" stroke-width="1.1" fill="none"/><text x="6.5" y="10" font-family="Liberation Sans, sans-serif" font-size="6.4" font-weight="bold" fill="#0f5868">2</text></svg><span class="nm" style="letter-spacing:-0.05px">RiskPercent</span><span class="vl" style="letter-spacing:-0.2px">10.0</span></div>
<div class="row" style="top:151px"><svg class="ic" width="16" height="16" viewBox="0 0 16 16"><defs><linearGradient id="gab" x1="0" y1="0" x2="0.6" y2="1"><stop offset="0" stop-color="#f8f0b4"/><stop offset="1" stop-color="#e9d977"/></linearGradient></defs><path d="M0.5 2.5Q0.5 0.5 2.5 0.5H12L15.5 4V15.2L14.2 15L12.6 12.8L11.1 14.2L9.6 12.8L8.1 14.2L6.6 12.8L5.1 14.2L3.6 12.8L2.1 14.5H0.5Z" fill="url(#gab)" stroke="#c9b650" stroke-width="1"/><path d="M12 0.8V4H15.2Z" fill="#fbf7dc" stroke="#c9b650" stroke-width="0.8" stroke-linejoin="round"/><text x="1.7" y="10.6" font-family="Liberation Sans, sans-serif" font-size="8.8" fill="#3c3400" stroke="#3c3400" stroke-width="0.22" letter-spacing="-0.1">ab</text></svg><span class="nm" style="letter-spacing:-0.05px">Comment_3</span><span class="vl" style="letter-spacing:0.24px">Risk for each Lot</span></div>
<div class="row odd" style="top:172px"><svg class="ic" width="16" height="16" viewBox="0 0 16 16"><defs><linearGradient id="gv2" x1="0" y1="0" x2="0.6" y2="1"><stop offset="0" stop-color="#c8f0f8"/><stop offset="1" stop-color="#88d6e6"/></linearGradient></defs><path d="M0.5 2.5Q0.5 0.5 2.5 0.5H12L15.5 4V15.2L14.2 15L12.6 12.8L11.1 14.2L9.6 12.8L8.1 14.2L6.6 12.8L5.1 14.2L3.6 12.8L2.1 14.5H0.5Z" fill="url(#gv2)" stroke="#58b2c6" stroke-width="1"/><path d="M12 0.8V4H15.2Z" fill="#e2f7fb" stroke="#58b2c6" stroke-width="0.8" stroke-linejoin="round"/><text x="1.6" y="7.6" font-family="Liberation Sans, sans-serif" font-size="6.4" font-weight="bold" fill="#0f5868">1</text><path d="M7.3 3L5.2 9.2" stroke="#0f5868" stroke-width="1.1" fill="none"/><text x="6.5" y="10" font-family="Liberation Sans, sans-serif" font-size="6.4" font-weight="bold" fill="#0f5868">2</text></svg><span class="nm" style="letter-spacing:0.03px">RiskPerTrade</span><span class="vl" style="letter-spacing:-0.2px">10.0</span></div>
<div class="row" style="top:193px"><svg class="ic" width="16" height="16" viewBox="0 0 16 16"><defs><linearGradient id="gab" x1="0" y1="0" x2="0.6" y2="1"><stop offset="0" stop-color="#f8f0b4"/><stop offset="1" stop-color="#e9d977"/></linearGradient></defs><path d="M0.5 2.5Q0.5 0.5 2.5 0.5H12L15.5 4V15.2L14.2 15L12.6 12.8L11.1 14.2L9.6 12.8L8.1 14.2L6.6 12.8L5.1 14.2L3.6 12.8L2.1 14.5H0.5Z" fill="url(#gab)" stroke="#c9b650" stroke-width="1"/><path d="M12 0.8V4H15.2Z" fill="#fbf7dc" stroke="#c9b650" stroke-width="0.8" stroke-linejoin="round"/><text x="1.7" y="10.6" font-family="Liberation Sans, sans-serif" font-size="8.8" fill="#3c3400" stroke="#3c3400" stroke-width="0.22" letter-spacing="-0.1">ab</text></svg><span class="nm" style="letter-spacing:-0.05px">Comment_4</span><span class="vl" style="letter-spacing:0.19px">EA will use strict supports and resistance...</span></div>
<div class="row odd" style="top:214px"><svg class="ic" width="16" height="16" viewBox="0 0 16 16"><defs><linearGradient id="gbool" x1="0" y1="0" x2="0.6" y2="1"><stop offset="0" stop-color="#b6f4be"/><stop offset="1" stop-color="#68d67e"/></linearGradient></defs><path d="M0.5 2.5Q0.5 0.5 2.5 0.5H12L15.5 4V15.2L14.2 15L12.6 12.8L11.1 14.2L9.6 12.8L8.1 14.2L6.6 12.8L5.1 14.2L3.6 12.8L2.1 14.5H0.5Z" fill="url(#gbool)" stroke="#4cbc66" stroke-width="1"/><path d="M12 0.8V4H15.2Z" fill="#dcf9e0" stroke="#4cbc66" stroke-width="0.8" stroke-linejoin="round"/><path d="M2.2 9.7H3.6L8 5.4M9.3 8.4L9.9 9.7H13" stroke="#0a7a1e" stroke-width="1.4" fill="none" stroke-linejoin="round" stroke-linecap="round"/></svg><span class="nm" style="letter-spacing:0.13px">Aggressive</span><span class="vl" style="letter-spacing:0.05px">false</span></div>
<div class="row" style="top:235px"><svg class="ic" width="16" height="16" viewBox="0 0 16 16"><defs><linearGradient id="gab" x1="0" y1="0" x2="0.6" y2="1"><stop offset="0" stop-color="#f8f0b4"/><stop offset="1" stop-color="#e9d977"/></linearGradient></defs><path d="M0.5 2.5Q0.5 0.5 2.5 0.5H12L15.5 4V15.2L14.2 15L12.6 12.8L11.1 14.2L9.6 12.8L8.1 14.2L6.6 12.8L5.1 14.2L3.6 12.8L2.1 14.5H0.5Z" fill="url(#gab)" stroke="#c9b650" stroke-width="1"/><path d="M12 0.8V4H15.2Z" fill="#fbf7dc" stroke="#c9b650" stroke-width="0.8" stroke-linejoin="round"/><text x="1.7" y="10.6" font-family="Liberation Sans, sans-serif" font-size="8.8" fill="#3c3400" stroke="#3c3400" stroke-width="0.22" letter-spacing="-0.1">ab</text></svg><span class="nm" style="letter-spacing:-0.05px">Comment_5</span><span class="vl" style="letter-spacing:0.34px">Profitable orders will leave opened by tr...</span></div>
<i class="cv"></i>
<div class="sb"><i class="th"></i></div>
</div>
<div class="btn" style="left:564px;top:253px;width:121px">加载(<u>L</u>)</div>
<div class="btn" style="left:564px;top:296px;width:121px">保存(<u>S</u>)</div>
<div class="btn def" style="left:417px;top:332px;width:86px">确定</div>
<div class="btn" style="left:512px;top:332px;width:86px">取消</div>
<div class="btn" style="left:606px;top:332px;width:86px">重设</div>
<svg class="grip" width="10" height="10" viewBox="0 0 10 10" shape-rendering="crispEdges"><g fill="#a6a6a6"><rect x="6" y="1" width="2" height="2"/><rect x="3" y="4" width="2" height="2"/><rect x="6" y="4" width="2" height="2"/><rect x="1" y="7" width="1" height="2"/><rect x="3" y="7" width="2" height="2"/><rect x="6" y="7" width="2" height="2"/></g></svg>
</div>
</div>
</body></html>
